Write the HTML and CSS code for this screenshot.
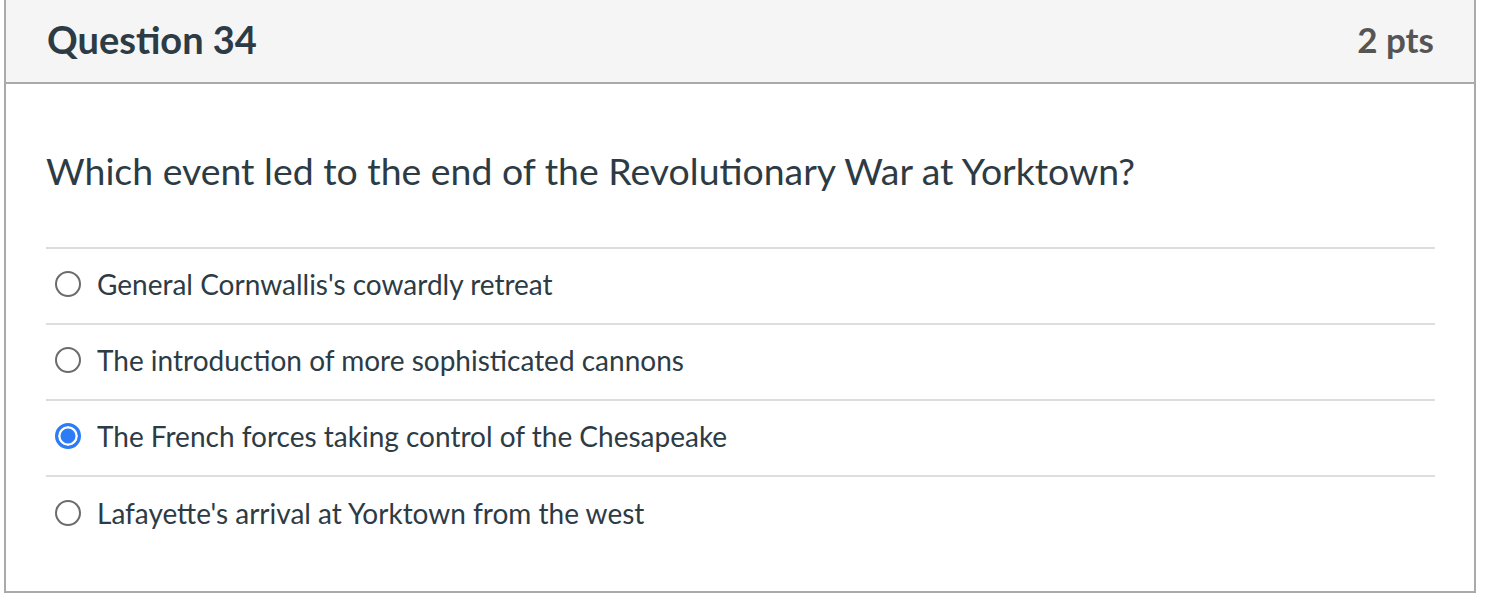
FILE: index.html
```html
<!DOCTYPE html>
<html>
<head>
<meta charset="utf-8">
<link rel="stylesheet" href="styles.css">
</head>
<body>
<div class="question">
  <div class="q-header">
    <h2 class="q-title">Question 34</h2>
    <span class="q-points">2 pts</span>
  </div>
  <div class="q-body">
    <p class="q-text">Which event led to the end of the Revolutionary War at Yorktown?</p>
    <div class="answers">
      <label class="answer"><span class="radio"></span><span class="a-text">General Cornwallis's cowardly retreat</span></label>
      <label class="answer"><span class="radio"></span><span class="a-text">The introduction of more sophisticated cannons</span></label>
      <label class="answer"><span class="radio checked"></span><span class="a-text">The French forces taking control of the Chesapeake</span></label>
      <label class="answer"><span class="radio"></span><span class="a-text">Lafayette's arrival at Yorktown from the west</span></label>
    </div>
  </div>
</div>
</body>
</html>
```

FILE: styles.css
```css
* { box-sizing: border-box; }
body {
  margin: 0;
  background: #fff;
  font-family: Lato, "Liberation Sans", sans-serif;
  color: #2d3b45;
}
.question {
  margin-left: 4px;
  width: 1472px;
  height: 593px;
  border: 2px solid #aaaaaa;
  border-top: none;
}
.q-header {
  height: 84px;
  background: #f5f5f5;
  border-bottom: 2px solid #aaaaaa;
  display: flex;
  align-items: center;
  justify-content: space-between;
  padding: 0 40px 4px 41px;
}
.q-title {
  margin: 0;
  font-size: 38px;
  font-weight: 700;
  color: #2d3b45;
}
.q-points {
  font-size: 35px;
  font-weight: 700;
  color: #555555;
}
.q-body {
  padding: 0 39px 0 40px;
}
.q-text {
  margin: 0;
  padding-top: 64px;
  height: 163px;
  font-size: 37.4px;
  line-height: 46px;
}
.answers {
  border-top: 2px solid #dddddd;
}
.answer {
  display: flex;
  align-items: center;
  height: 76px;
  border-bottom: 2px solid #dddddd;
  padding-left: 9px;
  padding-bottom: 4px;
  font-size: 28px;
}
.answer:last-child { border-bottom: none; }
.radio {
  width: 26px;
  height: 26px;
  border-radius: 50%;
  border: 2px solid #6b6b6b;
  margin-right: 16px;
  flex: none;
}
.radio.checked {
  border: 3px solid #2d7cf6;
  box-shadow: inset 0 0 0 2.5px #fff;
  background: #2d7cf6;
}
```
